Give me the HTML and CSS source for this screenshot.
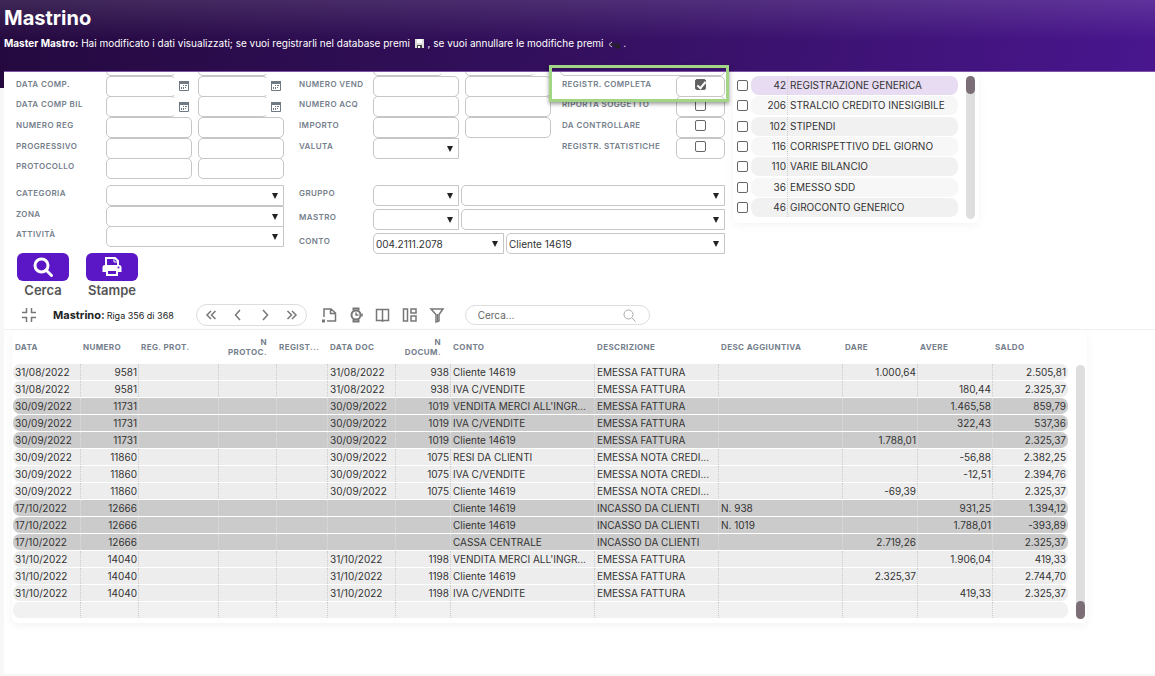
FILE: index.html
```html
<!DOCTYPE html>
<html lang="it">
<head>
    <meta charset="UTF-8">
    <meta name="viewport" content="width=device-width, initial-scale=1.0">
    <title>Mastrino</title>
    <link rel="stylesheet" href="styles.css">
</head>
<body>
    <header class="header">
        <h1>Mastrino</h1>
        <p><b>Master Mastro:</b> Hai modificato i dati visualizzati; se vuoi registrarli nel database premi
            <svg class="msg-icon" width="10" height="10" viewBox="0 0 10 10"><path d="M0 0h9v9H0z" fill="#ddd"/><path d="M2 0h5v4H2z" fill="#fff"/><path d="M2 6h5v3H2z" fill="#444"/><path d="M3 7h2v2H3z" fill="#fff"/></svg> , se vuoi annullare le modifiche premi
            <svg class="msg-icon" width="12" height="8" viewBox="0 0 12 8"><path d="M3 3.500h6q2 0 2 3H7" fill="none" stroke="#222" stroke-width="2"/><path d="M4 1L1 3.500l3 2.500" fill="none" stroke="#ccc"/></svg> .</p>
    </header>

    <main class="page">
        <div class="filters">
            <div class="filters-left">
                <div class="filter-row">
                    <div class="fields fields-a">
                        <label for="data-reg"></label>
                        <span class="date"><input type="text" id="data-reg"></span>
                        <span class="date"><input type="text" aria-label="Data reg a"></span>
                        <label for="data-comp">DATA COMP.</label>
                        <span class="date"><input type="text" id="data-comp"><svg class="cal" width="10" height="10" viewBox="0 0 10 10"><use href="#cal"/></svg></span>
                        <span class="date"><input type="text" aria-label="Data comp. a"><svg class="cal" width="10" height="10" viewBox="0 0 10 10"><use href="#cal"/></svg></span>
                        <label for="data-bil">DATA COMP BIL</label>
                        <span class="date"><input type="text" id="data-bil"><svg class="cal" width="10" height="10" viewBox="0 0 10 10"><use href="#cal"/></svg></span>
                        <span class="date"><input type="text" aria-label="Data comp bil a"><svg class="cal" width="10" height="10" viewBox="0 0 10 10"><use href="#cal"/></svg></span>
                        <label for="num-reg">NUMERO REG</label>
                        <input type="text" id="num-reg">
                        <input type="text" aria-label="Numero reg a">
                        <label for="progressivo">PROGRESSIVO</label>
                        <input type="text" id="progressivo">
                        <input type="text" aria-label="Progressivo a">
                        <label for="protocollo">PROTOCOLLO</label>
                        <input type="text" id="protocollo">
                        <input type="text" aria-label="Protocollo a">
                    </div>
                    <div class="fields fields-b">
                        <label for="data-doc"></label>
                        <span class="date"><input type="text" id="data-doc"></span>
                        <span class="date"><input type="text" aria-label="Data doc a"></span>
                        <label for="num-vend">NUMERO VEND</label>
                        <input type="text" id="num-vend">
                        <input type="text" aria-label="Numero vend a">
                        <label for="num-acq">NUMERO ACQ</label>
                        <input type="text" id="num-acq">
                        <input type="text" aria-label="Numero acq a">
                        <label for="importo">IMPORTO</label>
                        <input type="text" id="importo">
                        <input type="text" aria-label="Importo a">
                        <label for="valuta">VALUTA</label>
                        <span class="select"><select id="valuta"><option></option></select></span>
                    </div>
                    <div class="fields fields-c">
                        <input class="wide" type="text" aria-label="Causale">
                        <label for="completa">REGISTR. COMPLETA</label>
                        <span class="check"><input type="checkbox" id="completa" checked></span>
                        <label for="riporta">RIPORTA SOGGETTO</label>
                        <span class="check"><input type="checkbox" id="riporta"></span>
                        <label for="controllare">DA CONTROLLARE</label>
                        <span class="check"><input type="checkbox" id="controllare"></span>
                        <label for="statistiche">REGISTR. STATISTICHE</label>
                        <span class="check"><input type="checkbox" id="statistiche"></span>
                    </div>
                </div>
                <div class="filter-row">
                    <div class="combos combos-a">
                        <label for="categoria">CATEGORIA</label>
                        <span class="select"><select id="categoria"><option></option></select></span>
                        <label for="zona">ZONA</label>
                        <span class="select"><select id="zona"><option></option></select></span>
                        <label for="attivita">ATTIVITÀ</label>
                        <span class="select"><select id="attivita"><option></option></select></span>
                    </div>
                    <div class="combos-b">
                        <div class="combo-line">
                            <label for="gruppo">GRUPPO</label>
                            <span class="select short"><select id="gruppo"><option></option></select></span>
                            <span class="select grow"><select aria-label="Descrizione gruppo"><option></option></select></span>
                        </div>
                        <div class="combo-line">
                            <label for="mastro">MASTRO</label>
                            <span class="select short"><select id="mastro"><option></option></select></span>
                            <span class="select grow"><select aria-label="Descrizione mastro"><option></option></select></span>
                        </div>
                        <div class="combo-line">
                            <label for="conto">CONTO</label>
                            <span class="select medium"><select id="conto"><option>004.2111.2078</option></select></span>
                            <span class="select grow"><select aria-label="Descrizione conto"><option>Cliente 14619</option></select></span>
                        </div>
                    </div>
                </div>
            </div>
            <div class="causali">
                <ul class="causali-list">
                    <li><input type="checkbox" id="c42"><label class="selected" for="c42"><span class="code">42</span><span class="name">REGISTRAZIONE GENERICA</span></label></li>
                    <li><input type="checkbox" id="c206"><label for="c206"><span class="code">206</span><span class="name">STRALCIO CREDITO INESIGIBILE</span></label></li>
                    <li><input type="checkbox" id="c102"><label for="c102"><span class="code">102</span><span class="name">STIPENDI</span></label></li>
                    <li><input type="checkbox" id="c116"><label for="c116"><span class="code">116</span><span class="name">CORRISPETTIVO DEL GIORNO</span></label></li>
                    <li><input type="checkbox" id="c110"><label for="c110"><span class="code">110</span><span class="name">VARIE BILANCIO</span></label></li>
                    <li><input type="checkbox" id="c36"><label for="c36"><span class="code">36</span><span class="name">EMESSO SDD</span></label></li>
                    <li><input type="checkbox" id="c46"><label for="c46"><span class="code">46</span><span class="name">GIROCONTO GENERICO</span></label></li>
                </ul>
                <div class="scrollbar"><div class="thumb"></div></div>
            </div>
        </div>
        <div class="highlight"></div>

        <div class="actions">
            <button type="button" class="action">
                <span class="action-icon"><svg width="22" height="22" viewBox="0 0 22 22" fill="none" stroke="#fff" stroke-width="3"><circle cx="9.500" cy="9.500" r="6.500"/><path d="M14 14l5.500 5.500" stroke-linecap="round"/></svg></span>
                Cerca
            </button>
            <button type="button" class="action">
                <span class="action-icon"><svg width="20" height="20" viewBox="0 0 20 20"><path d="M4 8V1h9l3 3v4" fill="none" stroke="#fff" stroke-width="2"/><path d="M12 1v4h4" fill="none" stroke="#fff"/><path d="M3 8h14a2.500 2.500 0 0 1 2.500 2.500V15H.500v-4.500A2.500 2.500 0 0 1 3 8z" fill="#fff"/><path d="M5 13h10v5H5z" fill="#5b17c6" stroke="#fff" stroke-width="2"/><circle cx="16.500" cy="10.500" r="1" fill="#5b17c6"/></svg></span>
                Stampe
            </button>
        </div>

        <div class="toolbar">
            <button type="button" class="icon collapse" aria-label="Riduci"><svg width="16" height="16" viewBox="0 0 16 16"><path d="M1 5.500h4.500V1M15 5.500h-4.500V1M1 10.500h4.500V15M15 10.500h-4.500V15"/></svg></button>
            <strong>Mastrino:</strong>
            <span class="riga">Riga 356 di 368</span>
            <div class="pager">
                <button type="button" class="icon" aria-label="Prima"><svg width="12" height="12" viewBox="0 0 12 12"><path d="M6 2L2 6l4 4M10.500 2l-4 4 4 4"/></svg></button>
                <button type="button" class="icon" aria-label="Precedente"><svg width="12" height="12" viewBox="0 0 12 12"><path d="M8 1L3.500 6 8 11"/></svg></button>
                <button type="button" class="icon" aria-label="Successiva"><svg width="12" height="12" viewBox="0 0 12 12"><path d="M4 1l4.500 5L4 11"/></svg></button>
                <button type="button" class="icon" aria-label="Ultima"><svg width="12" height="12" viewBox="0 0 12 12"><path d="M1.500 2l4 4-4 4M6 2l4 4-4 4"/></svg></button>
            </div>
            <div class="tools">
                <button type="button" class="icon" aria-label="Nuovo"><svg width="16" height="16" viewBox="0 0 16 16"><path d="M3 10V2h7l4.500 4v8H6M9.500 2v4.500h5"/><path d="M1 12.500h3v3H1z" fill="#777" stroke="none"/></svg></button>
                <button type="button" class="icon" aria-label="Storico"><svg width="16" height="16" viewBox="0 0 16 16"><circle cx="8" cy="8" r="4.500" stroke-width="2"/><path d="M5.500 3.500V1.500h5v2M5.500 12.500v2h5v-2" stroke-width="2"/><path d="M8 5.500V8h2.500M14 6.500v3"/></svg></button>
                <button type="button" class="icon" aria-label="Colonne"><svg width="16" height="16" viewBox="0 0 16 16"><path d="M1.500 2.500h12v11h-12zM7.500 2v13"/></svg></button>
                <button type="button" class="icon" aria-label="Layout"><svg width="16" height="16" viewBox="0 0 16 16"><path d="M1.500 2h4v12h-4zM9 2h5v4H9zM9 9h5v5H9z"/></svg></button>
                <button type="button" class="icon" aria-label="Filtro"><svg width="16" height="16" viewBox="0 0 16 16"><path d="M2 2h12L10 7.500V14l-3 1V7.500z"/><path d="M8.500 7v7" stroke-width="1"/></svg></button>
            </div>
            <label class="search">
                <input type="text" placeholder="Cerca..." aria-label="Cerca nella griglia">
                <svg width="13" height="13" viewBox="0 0 13 13" fill="none" stroke="#aaa"><circle cx="5.500" cy="5.500" r="4.500"/><path d="M9 9l3.500 3.500"/></svg>
            </label>
        </div>

        <div class="panel">
            <table>
                <colgroup>
                    <col class="w68"><col class="w58"><col class="w80"><col class="w58"><col class="w51"><col class="w68"><col class="w55">
                    <col class="w144"><col class="w124"><col class="w124"><col class="w75"><col class="w75"><col class="w75">
                </colgroup>
                <thead>
                    <tr>
                        <th>DATA</th>
                        <th>NUMERO</th>
                        <th>REG. PROT.</th>
                        <th class="right">N PROTOC.</th>
                        <th>REGIST...</th>
                        <th>DATA DOC</th>
                        <th class="right">N DOCUM.</th>
                        <th>CONTO</th>
                        <th>DESCRIZIONE</th>
                        <th>DESC AGGIUNTIVA</th>
                        <th>DARE</th>
                        <th>AVERE</th>
                        <th>SALDO</th>
                    </tr>
                </thead>
                <tbody id="righe"></tbody>
            </table>
            <div class="scrollbar"><div class="thumb bottom"></div></div>
        </div>
    </main>

    <svg class="defs" width="0" height="0">
        <symbol id="cal" viewBox="0 0 10 10"><path d="M.5 1.500h9v8h-9z" fill="#fff" stroke="#6f7a85"/><path d="M0 0h10v3H0z" fill="#6f7a85"/><path d="M4 4h1v1H4zM6 4h2v1H6zM2 6h1v2H2zM4 6h1v2H4zM6 6h1v1H6z" fill="#6f7a85"/></symbol>
    </svg>

    <script>
        // data, numero, data doc, n docum, conto, descrizione, desc aggiuntiva, dare, avere, saldo, scura
        const righe = [
            ["31/08/2022", "9581", "31/08/2022", "938", "Cliente 14619", "EMESSA FATTURA", "", "1.000,64", "", "2.505,81", 0],
            ["31/08/2022", "9581", "31/08/2022", "938", "IVA C/VENDITE", "EMESSA FATTURA", "", "", "180,44", "2.325,37", 0],
            ["30/09/2022", "11731", "30/09/2022", "1019", "VENDITA MERCI ALL'INGR...", "EMESSA FATTURA", "", "", "1.465,58", "859,79", 1],
            ["30/09/2022", "11731", "30/09/2022", "1019", "IVA C/VENDITE", "EMESSA FATTURA", "", "", "322,43", "537,36", 1],
            ["30/09/2022", "11731", "30/09/2022", "1019", "Cliente 14619", "EMESSA FATTURA", "", "1.788,01", "", "2.325,37", 1],
            ["30/09/2022", "11860", "30/09/2022", "1075", "RESI DA CLIENTI", "EMESSA NOTA CREDI...", "", "", "-56,88", "2.382,25", 0],
            ["30/09/2022", "11860", "30/09/2022", "1075", "IVA C/VENDITE", "EMESSA NOTA CREDI...", "", "", "-12,51", "2.394,76", 0],
            ["30/09/2022", "11860", "30/09/2022", "1075", "Cliente 14619", "EMESSA NOTA CREDI...", "", "-69,39", "", "2.325,37", 0],
            ["17/10/2022", "12666", "", "", "Cliente 14619", "INCASSO DA CLIENTI", "N. 938", "", "931,25", "1.394,12", 1],
            ["17/10/2022", "12666", "", "", "Cliente 14619", "INCASSO DA CLIENTI", "N. 1019", "", "1.788,01", "-393,89", 1],
            ["17/10/2022", "12666", "", "", "CASSA CENTRALE", "INCASSO DA CLIENTI", "", "2.719,26", "", "2.325,37", 1],
            ["31/10/2022", "14040", "31/10/2022", "1198", "VENDITA MERCI ALL'INGR...", "EMESSA FATTURA", "", "", "1.906,04", "419,33", 0],
            ["31/10/2022", "14040", "31/10/2022", "1198", "Cliente 14619", "EMESSA FATTURA", "", "2.325,37", "", "2.744,70", 0],
            ["31/10/2022", "14040", "31/10/2022", "1198", "IVA C/VENDITE", "EMESSA FATTURA", "", "", "419,33", "2.325,37", 0],
            ["", "", "", "", "", "", "", "", "", "", 0]
        ];

        const tbody = document.getElementById('righe');
        righe.forEach(r => {
            const cls = r[10] ? 'dark' : (r[0] ? '' : 'empty');
            tbody.innerHTML += `
                <tr class="${cls}">
                    <td>${r[0]}</td>
                    <td class="num">${r[1]}</td>
                    <td></td>
                    <td></td>
                    <td></td>
                    <td>${r[2]}</td>
                    <td class="num">${r[3]}</td>
                    <td>${r[4]}</td>
                    <td>${r[5]}</td>
                    <td>${r[6]}</td>
                    <td class="num">${r[7]}</td>
                    <td class="num">${r[8]}</td>
                    <td class="num">${r[9]}</td>
                </tr>
            `;
        });
    </script>
</body>
</html>
```

FILE: styles.css
```css
* {
    box-sizing: border-box;
}
body {
    margin: 0;
    background: #f7f7f7;
    color: #333;
    font-family: Inter, "Liberation Sans", sans-serif;
    font-size: 10px;
}
.header {
    height: 88px;
    padding: 6px 4px;
    color: #fff;
    background: linear-gradient(rgba(255, 255, 255, 0.12), rgba(255, 255, 255, 0) 40px), linear-gradient(100deg, #24093f, #34105f 50%, #49168f);
}
.header h1 {
    margin: 0;
    font-size: 20px;
    line-height: 24px;
}
.header p {
    margin: 5px 0 0;
    line-height: 16px;
}
.msg-icon {
    margin-left: 2px;
    vertical-align: -2px;
}

.page {
    position: relative;
    min-height: calc(100vh - 74px);
    margin: -16px 0 2px 4px;
    background: #fff;
    box-shadow: 0 -1px 0 #7f55a8;
}
.filters {
    display: flex;
    height: 182px;
    overflow: hidden;
}
.filters-left {
    width: 721px;
    padding-left: 12px;
}
.filter-row {
    display: flex;
    gap: 15px;
}
label {
    color: #75808c;
    font-size: 8px;
    font-weight: 600;
    letter-spacing: 0.05em;
    line-height: 16px;
    white-space: nowrap;
}
input, select, button {
    font-family: inherit;
    font-size: 10px;
    color: #333;
}
input[type="text"], select, .check {
    width: 100%;
    height: 21px;
    margin: 0;
    padding: 0 2px;
    border: 1px solid #c6c6c6;
    border-radius: 5px;
    background: #fff;
}
/* the first row stays half scrolled under the header */
.fields {
    display: grid;
    grid-template-rows: repeat(6, minmax(0, 1fr));
    column-gap: 6px;
    height: 124px;
    margin-top: -17px;
}
.fields-a {
    grid-template-columns: 84px 86px 86px;
}
.fields-b {
    grid-template-columns: 68px 86px 86px;
}
.fields-c {
    grid-template-columns: 110px 49px;
    margin-left: -6px;
}
.fields-c label {
    padding-left: 2px;
}
.wide {
    grid-column: 1 / 3;
}
.date {
    display: flex;
    align-items: center;
    gap: 3px;
}
.date input[type="text"] {
    width: 70px;
    border-right-color: transparent;
}
.check {
    display: flex;
    align-items: center;
    justify-content: center;
}
input[type="checkbox"] {
    appearance: none;
    flex: none;
    width: 11px;
    height: 11px;
    margin: 0;
    border: 1px solid #666;
    border-radius: 2px;
    background: #fff;
}
.check input[type="checkbox"] {
    margin-bottom: 3px;
}
input[type="checkbox"]:checked {
    position: relative;
    background: #606060;
}
input[type="checkbox"]:checked::after {
    content: "";
    position: absolute;
    left: 3px;
    top: 0;
    width: 3px;
    height: 7px;
    border: solid #fff;
    border-width: 0 2px 2px 0;
    transform: rotate(40deg);
}
.select {
    position: relative;
    display: block;
}
.select select {
    appearance: none;
    border-radius: 5px 0 0 5px;
}
.select::after {
    content: "";
    position: absolute;
    right: 6px;
    top: 8px;
    border: solid transparent;
    border-width: 6px 3px 0;
    border-top-color: #222;
}
.combos {
    display: grid;
    grid-template: repeat(3, minmax(0, 1fr)) / 84px 178px;
    column-gap: 6px;
    height: 62px;
    margin-top: 6px;
}
.combos-b {
    display: flex;
    flex: 1;
    flex-direction: column;
    gap: 3px;
    margin-top: 6px;
}
.combo-line {
    display: flex;
    gap: 2px;
}
.combo-line label {
    width: 72px;
}
.short {
    width: 86px;
}
.medium {
    width: 131px;
}
.grow {
    flex: 1;
}

.highlight {
    position: absolute;
    left: 545px;
    top: -7px;
    width: 180px;
    height: 37px;
    border: 3px solid #a2d585;
    box-shadow: 0 2px 4px rgba(0, 0, 0, 0.4);
}

.causali {
    display: flex;
    gap: 8px;
    height: 151px;
    margin-left: 8px;
    padding: 3px 4px 4px;
    border-radius: 6px;
    box-shadow: 0 2px 10px rgba(0, 0, 0, 0.05);
}
.causali-list {
    display: grid;
    grid-template-rows: repeat(7, minmax(0, 1fr));
    width: 221px;
    height: 143px;
    margin: 0;
    padding: 0;
    list-style: none;
}
.causali-list li {
    display: flex;
    align-items: center;
    gap: 3px;
}
.causali-list label {
    display: flex;
    flex: 1;
    height: 19px;
    border-radius: 8px;
    background: #f7f7f7;
    color: #333;
    font-size: 10px;
    font-weight: 400;
    letter-spacing: normal;
    line-height: 19px;
}
.causali-list li:nth-child(odd) label {
    background: #f1f1f1;
}
.causali-list li label.selected {
    background: #e7dcf2;
}
.code {
    width: 37px;
    padding-right: 1px;
    border-right: 1px dotted #ccc;
    text-align: right;
}
.name {
    padding-left: 2px;
}
.scrollbar {
    display: flex;
    width: 9px;
    margin-top: 1px;
    border-radius: 5px;
    background: #dedede;
}
.thumb {
    width: 9px;
    height: 18px;
    border-radius: 5px;
    background: #7b6e76;
}
.thumb.bottom {
    align-self: flex-end;
}

.actions {
    display: flex;
    gap: 17px;
    margin-top: -1px;
    padding: 0 0 1px 13px;
}
.action {
    display: flex;
    flex-direction: column;
    align-items: center;
    width: 52px;
    padding: 0;
    border: none;
    background: none;
    color: #555;
    font-size: 13px;
    font-weight: 600;
    line-height: 18px;
    cursor: pointer;
}
.action-icon {
    display: flex;
    align-items: center;
    justify-content: center;
    width: 52px;
    height: 28px;
    border-radius: 6px;
    background: #5b17c6;
}

.toolbar {
    display: flex;
    align-items: center;
    height: 30px;
    padding: 1px 0 0 17px;
    border-bottom: 1px solid #f0f0f0;
}
.toolbar strong {
    color: #222;
    font-size: 11px;
}
.icon {
    display: flex;
    padding: 0;
    border: none;
    background: none;
    cursor: pointer;
}
.icon svg {
    fill: none;
    stroke: #777;
    stroke-width: 1.5;
}
.collapse {
    margin-right: 16px;
}
.riga {
    width: 89px;
    margin-left: 2px;
    color: #222;
    font-size: 9px;
    white-space: nowrap;
}
.pager {
    display: flex;
    align-items: center;
    justify-content: space-between;
    width: 111px;
    height: 22px;
    padding: 0 8px;
    border: 1px solid #ddd;
    border-radius: 11px;
}
.tools {
    display: flex;
    gap: 11px;
    margin: 0 20px 0 14px;
}
.search {
    display: flex;
    align-items: center;
    width: 185px;
    height: 20px;
    padding: 0 13px 0 10px;
    border: 1px solid #ddd;
    border-radius: 10px;
}
.search input[type="text"] {
    flex: 1;
    height: 16px;
    border: none;
}
.search input::placeholder {
    color: #666;
}

.panel {
    display: flex;
    gap: 8px;
    margin: 0 68px 0 8px;
    padding: 0 2px 4px 1px;
    border-radius: 6px;
    box-shadow: 0 3px 10px rgba(0, 0, 0, 0.05);
}
.panel .scrollbar {
    flex: none;
    margin-top: 35px;
}
table {
    flex: 1;
    width: 100%;
    table-layout: fixed;
    border-collapse: separate;
    border-spacing: 0 1px;
}
.w51 { width: 51px; }
.w55 { width: 55px; }
.w58 { width: 58px; }
.w68 { width: 68px; }
.w75 { width: 75px; }
.w80 { width: 80px; }
.w124 { width: 124px; }
.w144 { width: 144px; }
th {
    height: 32px;
    padding: 0 2px;
    overflow: hidden;
    color: #75808c;
    font-size: 8px;
    font-weight: 700;
    letter-spacing: 0.05em;
    line-height: 10px;
    text-align: left;
    text-overflow: ellipsis;
}
th.right {
    padding-right: 10px;
    text-align: right;
}
td {
    height: 16px;
    padding: 0 2px;
    overflow: hidden;
    border-right: 1px dotted #ccc;
    background: #ededed;
    line-height: 16px;
    text-overflow: ellipsis;
    white-space: nowrap;
}
td.num {
    padding-right: 1px;
    text-align: right;
}
td:first-child {
    border-radius: 7px 0 0 7px;
}
td:last-child {
    border-right: none;
    border-radius: 0 7px 7px 0;
    padding-right: 2px;
}
.dark td {
    background: #cbcbcb;
    border-right-color: #ddd;
}
.empty td {
    background: #f1f1f1;
}
.defs {
    position: absolute;
}
```
